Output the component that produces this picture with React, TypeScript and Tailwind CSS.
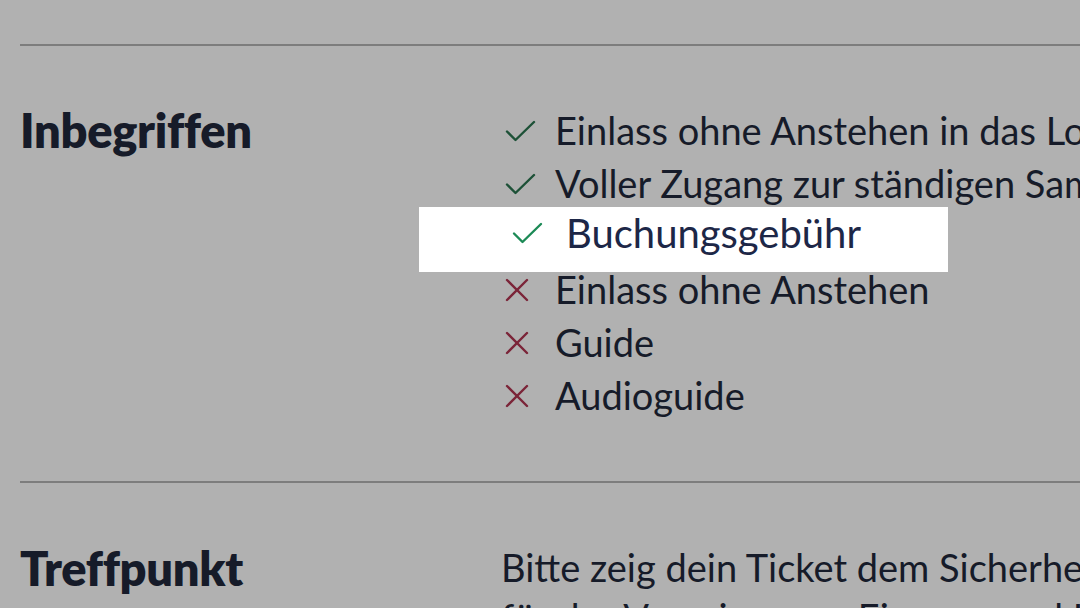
import React from "react";

interface Feature {
  label: string;
  included: boolean;
  highlight?: boolean;
}

const features: Feature[] = [
  { label: "Einlass ohne Anstehen in das Louvre-Museum", included: true },
  { label: "Voller Zugang zur ständigen Sammlung", included: true },
  { label: "Buchungsgebühr", included: true, highlight: true },
  { label: "Einlass ohne Anstehen", included: false },
  { label: "Guide", included: false },
  { label: "Audioguide", included: false },
];

function Check({ bright }: { bright?: boolean }) {
  return (
    <svg width="32" height="22" viewBox="0 0 32 22" fill="none">
      <path
        d="M2 11.5 L10.5 20 L29 2"
        stroke={bright ? "#1c8a56" : "#1d5137"}
        strokeWidth="2.4"
        strokeLinecap="round"
        strokeLinejoin="round"
      />
    </svg>
  );
}

function Cross() {
  return (
    <svg width="24" height="24" viewBox="0 0 24 24" fill="none">
      <path d="M2 2 L22 22 M22 2 L2 22" stroke="#7b2438" strokeWidth="2.4" strokeLinecap="round" />
    </svg>
  );
}

export default function App() {
  return (
    <div
      className="w-[1080px] h-[608px] overflow-hidden bg-[#b1b1b1] text-[#161b29]"
      style={{ fontFamily: "Lato, 'Noto Sans', sans-serif" }}
    >
      <div className="w-[1500px] pl-5 pt-[44px]">
        <div className="h-[2px] bg-[#7d7d7d]" />

        {/* Included */}
        <section className="grid grid-cols-[481px_1fr] pt-[58px] pb-[59px]">
          <h2 className="text-[47px] font-extrabold leading-[53px] tracking-[-0.3px]">Inbegriffen</h2>
          <ul className="flex flex-col">
            {features.map((f) => (
              <li key={f.label} className="relative flex items-center h-[53px] whitespace-nowrap">
                {f.highlight && (
                  <div className="absolute left-[-82px] top-[-3px] w-[529px] h-[65px] bg-white" />
                )}
                <div
                  className={
                    f.highlight
                      ? "relative z-10 flex items-center ml-[7px] -mt-[7px]"
                      : "relative z-10 flex items-center"
                  }
                >
                  <span className="w-[54px] flex items-center pl-[4px]">
                    {f.included ? <Check bright={f.highlight} /> : <Cross />}
                  </span>
                  <span
                    className={
                      f.highlight
                        ? "text-[40px] text-[#1d2747] ml-[4px]"
                        : "text-[38px]"
                    }
                  >
                    {f.label}
                  </span>
                </div>
              </li>
            ))}
          </ul>
        </section>

        <div className="h-[2px] bg-[#7d7d7d]" />

        {/* Meeting point */}
        <section className="grid grid-cols-[481px_1fr] pt-[59px]">
          <h2 className="text-[47px] font-extrabold leading-[53px] tracking-[-0.3px]">Treffpunkt</h2>
          <p className="text-[38px] leading-[50px] whitespace-nowrap">
            Bitte zeig dein Ticket dem Sicherheitspersonal am Eingang
            <br />
            für das Vorzeigen am Eingang und Haupteingang
          </p>
        </section>
      </div>
    </div>
  );
}
